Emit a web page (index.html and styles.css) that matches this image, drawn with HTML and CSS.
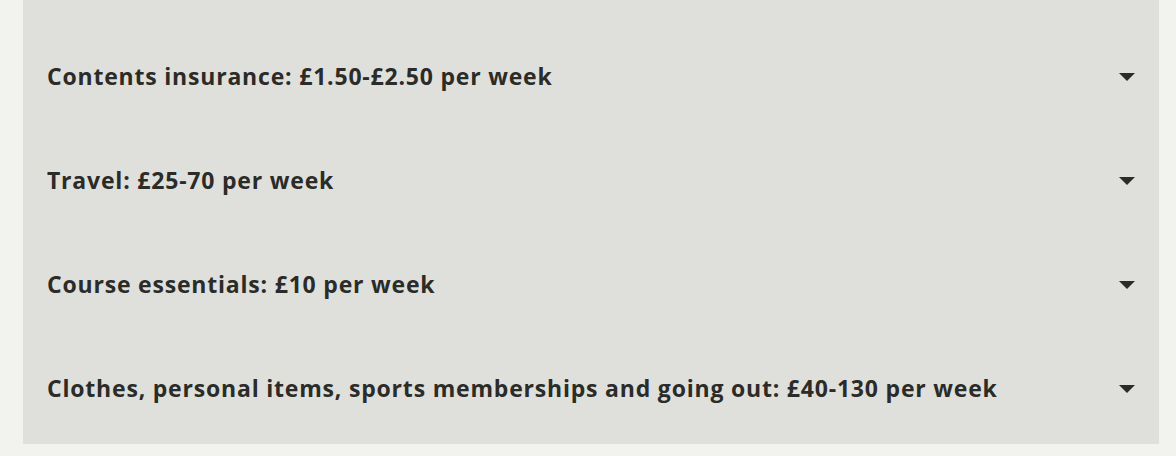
FILE: index.html
```html
<!DOCTYPE html>
<html lang="en">
<head>
<meta charset="utf-8">
<title>Costs</title>
<link rel="stylesheet" href="styles.css">
</head>
<body>
<section class="panel">
  <div class="row"><span class="label">Contents insurance: £1.50-£2.50 per week</span><span class="caret"></span></div>
  <div class="row"><span class="label">Travel: £25-70 per week</span><span class="caret"></span></div>
  <div class="row"><span class="label">Course essentials: £10 per week</span><span class="caret"></span></div>
  <div class="row"><span class="label">Clothes, personal items, sports memberships and going out: £40-130 per week</span><span class="caret"></span></div>
</section>
</body>
</html>
```
FILE: styles.css
```css
html, body {
  margin: 0;
  padding: 0;
  background: #f2f3ef;
}
body {
  padding: 0 17px 0 23px;
  font-family: "Open Sans", "Noto Sans", sans-serif;
}
.panel {
  background: #dfe0dc;
  padding: 25px 0 3px;
  display: flex;
  flex-direction: column;
}
.row {
  height: 104px;
  display: flex;
  align-items: center;
  justify-content: space-between;
  padding: 0 24px 0 24px;
}
.label {
  font-size: 23px;
  line-height: 30px;
  margin-top: -3px;
  font-weight: 700;
  color: #2b2b28;
  letter-spacing: 0.8px;
}
.caret {
  width: 0;
  height: 0;
  border-left: 8px solid transparent;
  border-right: 8px solid transparent;
  border-top: 8px solid #2b2b28;
}
```
